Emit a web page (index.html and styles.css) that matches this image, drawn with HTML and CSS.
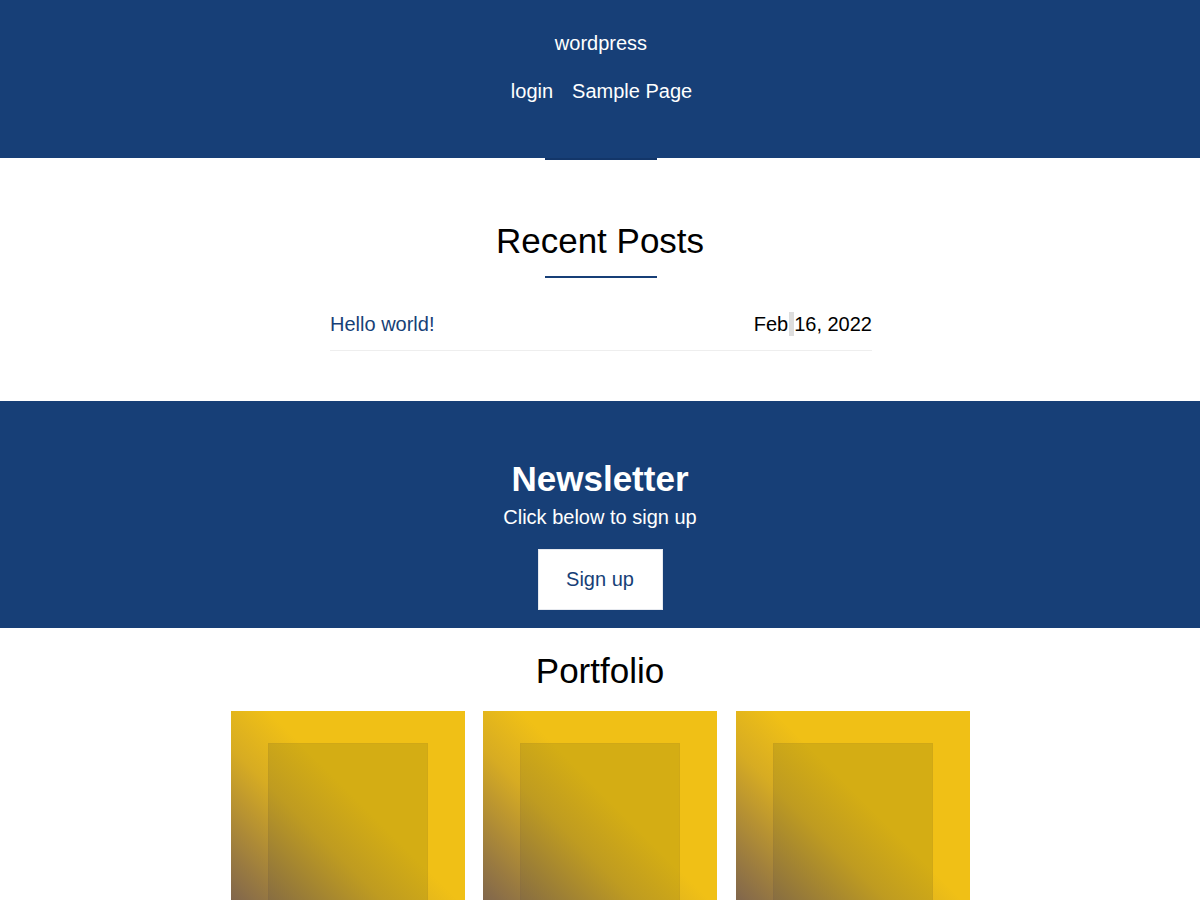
FILE: index.html
```html
<!DOCTYPE html>
<html lang="en">
<head>
<meta charset="utf-8">
<title>wordpress</title>
<link rel="stylesheet" href="styles.css">
</head>
<body>
<header class="site-header">
  <div class="site-title">wordpress</div>
  <nav class="site-nav">
    <a href="#">login</a>
    <a href="#">Sample Page</a>
  </nav>
</header>
<div class="header-bar"></div>

<section class="recent">
  <h2 class="section-title">Recent Posts</h2>
  <div class="title-rule"></div>
  <div class="post-row">
    <a class="post-link" href="#">Hello world!</a>
    <span class="post-date">Feb<span class="caret"> </span>16, 2022</span>
  </div>
</section>

<section class="newsletter">
  <h2 class="nl-title">Newsletter</h2>
  <p class="nl-sub">Click below to sign up</p>
  <a class="nl-button" href="#">Sign up</a>
</section>

<section class="portfolio">
  <h2 class="section-title">Portfolio</h2>
  <div class="tiles">
    <div class="tile"><div class="tile-inner"></div><div class="tile-shade"></div></div>
    <div class="tile"><div class="tile-inner"></div><div class="tile-shade"></div></div>
    <div class="tile"><div class="tile-inner"></div><div class="tile-shade"></div></div>
  </div>
</section>
</body>
</html>
```

FILE: styles.css
```css
* { box-sizing: border-box; }
html, body {
  margin: 0;
  padding: 0;
  background: #ffffff;
  font-family: "Liberation Sans", Arial, sans-serif;
  color: #111;
}
a { text-decoration: none; }

.site-header {
  background: #173f77;
  height: 158px;
  display: flex;
  flex-direction: column;
  align-items: center;
  padding-top: 31px;
  color: #fff;
}
.site-title {
  font-size: 20px;
  line-height: 24px;
  padding-left: 2px;
}
.site-nav {
  display: flex;
  gap: 19px;
  margin-top: 24px;
  padding-left: 3px;
}
.site-nav a {
  color: #fff;
  font-size: 20px;
  line-height: 24px;
}
.header-bar {
  width: 112px;
  height: 2px;
  margin: 0 auto;
  background: #133669;
  transform: translateX(1px);
}

.recent {
  display: flex;
  flex-direction: column;
  align-items: center;
  padding-top: 60px;
  height: 241px;
}
.section-title {
  margin: 0;
  font-size: 35px;
  line-height: 42px;
  font-weight: 500;
  color: #000;
}
.title-rule {
  width: 112px;
  height: 2px;
  background: #173f77;
  margin-top: 14px;
  transform: translateX(1px);
}
.post-row {
  width: 542px;
  display: flex;
  justify-content: space-between;
  align-items: center;
  margin-top: 34px;
  margin-left: 2px;
  padding-bottom: 14px;
  border-bottom: 1px solid #eeeeee;
  font-size: 20px;
  line-height: 24px;
}
.post-link { color: #173f77; }
.post-date { color: #000; }
.caret {
  display: inline-block;
  width: 5px;
  height: 24px;
  background: #dddddd;
  vertical-align: top;
  margin: 0 0 0 1px;
}

.newsletter {
  background: #173f77;
  height: 227px;
  display: flex;
  flex-direction: column;
  align-items: center;
  padding-top: 58px;
  color: #fff;
}
.nl-title {
  margin: 0;
  font-size: 35px;
  line-height: 40px;
  font-weight: 700;
}
.nl-sub {
  margin: 6px 0 0;
  font-size: 20px;
  line-height: 24px;
}
.nl-button {
  margin-top: 20px;
  width: 125px;
  height: 61px;
  background: #fff;
  border: 1px solid #e6e9ef;
  color: #173f77;
  font-size: 20px;
  display: flex;
  align-items: center;
  justify-content: center;
}

.portfolio {
  display: flex;
  flex-direction: column;
  align-items: center;
  padding-top: 22px;
}
.tiles {
  display: flex;
  gap: 18.5px;
  margin-top: 19px;
}
.tile {
  position: relative;
  width: 234px;
  height: 234px;
  background: #f0c016;
  padding: 32px 0 0 37px;
}
.tile-inner {
  width: 160px;
  height: 170px;
  background: #d4ad14;
  border: 1px solid #d0a816;
}
.tile-shade {
  position: absolute;
  inset: 0;
  background: linear-gradient(45deg, rgba(70,55,105,0.8) 0%, rgba(70,55,105,0.5) 20%, rgba(70,55,105,0.15) 42%, rgba(70,55,105,0) 58%);
}
```
